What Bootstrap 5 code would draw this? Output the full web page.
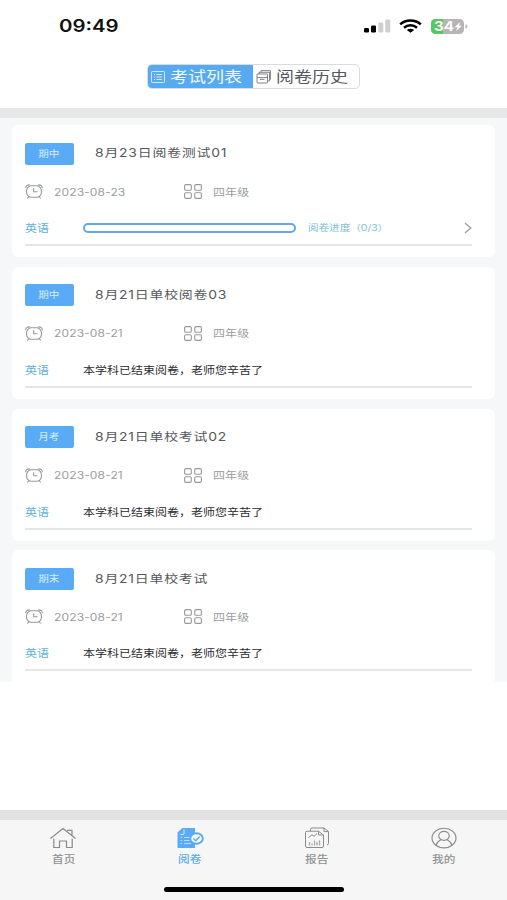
<!DOCTYPE html>
<html lang="zh-CN">
<head>
<meta charset="utf-8">
<meta name="viewport" content="width=device-width, initial-scale=1">
<title>阅卷</title>
<link href="https://cdn.jsdelivr.net/npm/bootstrap@5.3.0/dist/css/bootstrap.min.css" rel="stylesheet">
<style>
body{font-family:Inter,"Noto Sans CJK SC",sans-serif;background:#fff;height:900px;overflow:hidden;line-height:1}
svg{display:block;flex:none}
/* extended letterforms used through the whole app */
.wd{display:inline-block;transform:scaleX(1.2);transform-origin:0 50%;white-space:nowrap}
.statusbar{height:52px;padding:0 39px 0 59px}
.clock{font-size:17px;font-weight:600;color:#111}
.tabs-wrap{height:56px;padding-top:12px}
.seg{width:213px;height:25px;border-radius:5px;border:1px solid #d9dbde;overflow:hidden;font-size:15px}
.seg-a{width:106px;height:25px;margin:-1px 0 -1px -1px;background:#58aaf0;color:#eef7ff;padding-left:4px}
.seg-b{color:#565a60;padding-left:3px}
.band{height:10px;background:#e7e8e8}
.list{height:564px;background:#f5f7f8;padding:7px 12px 0;overflow:hidden}
.exam{height:132px;border:0;border-radius:6px;margin-bottom:9.8px;padding:0 23px 0 12.5px}
.exam:last-child{border-radius:6px 6px 0 0}
.r1{height:22px;margin-top:17.5px}
.tag{width:49.5px;height:22px;background:#58abf4;color:#d9eefd;border-radius:2px;font-size:8.8px;padding-top:1px}
.tag .wd,.tabitem .wd{transform-origin:50% 50%}
.name{font-size:11.6px;color:#55585c;margin-left:21px;letter-spacing:.65px;padding-top:1px}
.r2{height:20px;margin-top:17px;font-size:10px;color:#9b9da0}
.date{margin-left:11.5px;width:130px;letter-spacing:.12px}
.grade{margin-left:11px;letter-spacing:.1px}
.r3{height:25px;margin-top:14px;font-size:10px;color:#5eb2d8}
.subj{width:58.500px}
.msg{color:#2b2c2e}
.bar{width:213px;height:10px;border:2px solid #62a9e3;border-radius:5px;background:#fff}
.prog-t{font-size:8.8px;color:#7dc0d0;margin-left:11.5px}
.rule{height:2px;background:#e4e5e6;margin-top:3.5px}
.blank{height:128px}
.foot{height:80px;background:#f6f6f6;position:relative}
.foot-band{background:#e2e2e2}
.tabitem{width:25%;font-size:9.7px;color:#929292;padding-top:7px}
.tabitem.on{color:#58abf4}
.tabitem .wd{margin-top:6px;font-weight:500}
.homebar{position:absolute;left:164px;top:67px;width:180px;height:5px;border-radius:3px;background:#000}
</style>
<script src="https://cdn.jsdelivr.net/npm/bootstrap@5.3.0/dist/js/bootstrap.bundle.min.js"></script>
</head>
<body>
<svg width="0" height="0" class="position-absolute">
<symbol id="clk" viewBox="0 0 18 15"><g fill="none" stroke="#96999c" stroke-width="1.100"><path d="M5.500 1.700h7q4 1.300 4 5.900t-4 5.700h-7q-4-1.100-4-5.700t4-5.900z"/><path d="M8.700 4.200v3.600h3.800M.7 4.200C.6 2 2.300.8 4.800.9M17.300 4.200C17.400 2 15.700.8 13.200.9M3.800 12.700 2.300 14.500M14.200 12.700l1.500 1.800"/></g></symbol>
<symbol id="grid" viewBox="0 0 18 15"><g fill="none" stroke="#96999c" stroke-width="1.100"><rect x=".6" y=".6" width="6.700" height="5.600" rx="1.300"/><rect x="10.700" y=".6" width="6.700" height="5.600" rx="1.300"/><rect x=".6" y="8.800" width="6.700" height="5.600" rx="1.300"/><rect x="10.700" y="8.800" width="6.700" height="5.600" rx="1.300"/></g></symbol>
</svg>

<header>
<div class="statusbar d-flex justify-content-between align-items-center">
<span class="clock wd">09:49</span>
<div class="d-flex align-items-center">
<svg width="27" height="14" viewBox="0 0 27 14"><rect y="9" width="5" height="4.500" rx="1.200"/><rect x="7" y="6.500" width="5" height="7" rx="1.200"/><g fill="#cfcfcf"><rect x="14.300" y="3.500" width="5" height="10" rx="1.200"/><rect x="21.300" y=".5" width="5" height="13" rx="1.200"/></g></svg>
<svg class="ms-2" width="23" height="14" viewBox="0 0 23 14"><g fill="none" stroke="#000" stroke-width="2.500"><path d="M1.200 5.300C6.800.2 16.200.2 21.800 5.300"/><path d="M5 8.700c3.700-3.200 9.300-3.200 13 0"/></g><path d="M7.800 11q3.700-2.500 7.400 0L11.500 13.700z"/></svg>
<svg style="margin-left:9px" width="37" height="15" viewBox="0 0 37 15"><defs><clipPath id="bt"><rect width="33" height="15" rx="4.500"/></clipPath></defs><g clip-path="url(#bt)"><rect width="33" height="15" fill="#b5b5b5"/><rect width="12" height="15" fill="#55c960"/></g><path d="M34.500 5q2 .6 2 2.500t-2 2.500z" fill="#bbb"/><text x="3" y="12" font-family="Inter" font-size="12.500" font-weight="700" fill="#fff" textLength="20" lengthAdjust="spacingAndGlyphs">34</text><path d="M29 3 23.500 8.300h3L25 12l6-5.300h-3z" fill="#fff"/></svg>
</div>
</div>
<div class="tabs-wrap d-flex justify-content-center">
<div class="seg d-flex align-items-center">
<div class="seg-a d-flex align-items-center"><svg width="14" height="12" viewBox="0 0 14 12" fill="none" stroke="#e5f2fd" stroke-width=".9"><rect x=".5" y=".5" width="13" height="11" rx=".8"/><path d="M3 3.500h1.200M5.500 3.500H11M3 6h1.200M5.500 6H11M3 8.500h1.200M5.500 8.500H11"/></svg><span class="wd" style="margin-left:5px">考试列表</span></div>
<div class="seg-b d-flex align-items-center"><svg width="15" height="14" viewBox="0 0 15 14" fill="none" stroke="#74777c" stroke-width=".9"><rect x="1" y="4" width="10.500" height="9" rx=".6"/><path d="M1 7.600h10.500M4 9.400h4.500M3 4V2.300h10.500v8.500h-2M5 2.300V.6h9.400v8.800h-1"/></svg><span class="wd" style="margin-left:5px">阅卷历史</span></div>
</div>
</div>
<div class="band"></div>
</header>

<main>
<div class="list">
<article class="card exam">
<div class="r1 d-flex align-items-center"><span class="tag d-flex align-items-center justify-content-center"><span class="wd">期中</span></span><span class="name wd">8月23日阅卷测试01</span></div>
<div class="r2 d-flex align-items-center"><svg width="18" height="15"><use href="#clk"/></svg><span class="date"><span class="wd">2023-08-23</span></span><svg width="18" height="15"><use href="#grid"/></svg><span class="grade wd">四年级</span></div>
<div class="r3 d-flex align-items-center"><span class="subj"><span class="wd">英语</span></span><div class="bar"></div><span class="prog-t wd">阅卷进度（0/3）</span><svg class="ms-auto" width="8" height="12" viewBox="0 0 8 12" fill="none" stroke="#9a9c9e" stroke-width="1.300"><path d="M1 1 6.800 6 1 11"/></svg></div>
<div class="rule"></div>
</article>
<article class="card exam">
<div class="r1 d-flex align-items-center"><span class="tag d-flex align-items-center justify-content-center"><span class="wd">期中</span></span><span class="name wd">8月21日单校阅卷03</span></div>
<div class="r2 d-flex align-items-center"><svg width="18" height="15"><use href="#clk"/></svg><span class="date"><span class="wd">2023-08-21</span></span><svg width="18" height="15"><use href="#grid"/></svg><span class="grade wd">四年级</span></div>
<div class="r3 d-flex align-items-center"><span class="subj"><span class="wd">英语</span></span><span class="msg wd">本学科已结束阅卷，老师您辛苦了</span></div>
<div class="rule"></div>
</article>
<article class="card exam">
<div class="r1 d-flex align-items-center"><span class="tag d-flex align-items-center justify-content-center"><span class="wd">月考</span></span><span class="name wd">8月21日单校考试02</span></div>
<div class="r2 d-flex align-items-center"><svg width="18" height="15"><use href="#clk"/></svg><span class="date"><span class="wd">2023-08-21</span></span><svg width="18" height="15"><use href="#grid"/></svg><span class="grade wd">四年级</span></div>
<div class="r3 d-flex align-items-center"><span class="subj"><span class="wd">英语</span></span><span class="msg wd">本学科已结束阅卷，老师您辛苦了</span></div>
<div class="rule"></div>
</article>
<article class="card exam">
<div class="r1 d-flex align-items-center"><span class="tag d-flex align-items-center justify-content-center"><span class="wd">期末</span></span><span class="name wd">8月21日单校考试</span></div>
<div class="r2 d-flex align-items-center"><svg width="18" height="15"><use href="#clk"/></svg><span class="date"><span class="wd">2023-08-21</span></span><svg width="18" height="15"><use href="#grid"/></svg><span class="grade wd">四年级</span></div>
<div class="r3 d-flex align-items-center"><span class="subj"><span class="wd">英语</span></span><span class="msg wd">本学科已结束阅卷，老师您辛苦了</span></div>
<div class="rule"></div>
</article>
</div>
<div class="blank"></div>
</main>

<footer>
<div class="band foot-band"></div>
<nav class="foot d-flex">
<div class="tabitem d-flex flex-column align-items-center"><svg width="28" height="22" viewBox="0 0 28 22" fill="none" stroke="#8b8b8b" stroke-width="1.200"><path d="M1.500 11.500 14 1.500l12.500 10M18 3.300h5v5M4.800 11.800v8.700h5.700v-6.500h7v6.500h5.700v-8.700"/></svg><span class="wd">首页</span></div>
<div class="tabitem on d-flex flex-column align-items-center"><svg width="28" height="22" viewBox="0 0 28 22"><path d="M6.500 1H19v20H1.500V5.500z" fill="#58abf4"/><g fill="none" stroke="#d8edfd" stroke-width="1"><path d="M8 2.500v4q0 1-1 1H4.500"/><path stroke-opacity=".75" d="M4.500 10.500h1.800M8 10.500h6M4.500 13.500h1.800M8 13.500h6M4.500 16.500h1.800M8 16.500h7"/></g><ellipse cx="20.500" cy="11.500" rx="6.300" ry="5.300" fill="#f6f6f6" stroke="#58abf4" stroke-width="1.900"/><path d="m17.300 11.500 2.500 2.200 4-4.200" fill="none" stroke="#58abf4" stroke-width="1.500"/></svg><span class="wd">阅卷</span></div>
<div class="tabitem d-flex flex-column align-items-center"><svg width="26" height="22" viewBox="0 0 26 22" fill="none" stroke="#8b8b8b" stroke-width="1"><path d="M3 4.200h11.500L19.500 8v11q0 1.500-1.500 1.500H3q-1.500 0-1.500-1.500V5.700Q1.500 4.200 3 4.200zM14.500 4.200V8h5M6.500 4V2.500Q6.500 1 8 1h12l4.500 3.600v11.900q0 1.200-1.500 1.200M20 1v3.600h4.500"/><path d="M4.500 10.500 8 7.800l2 1.500L13 6.500"/><path stroke-width="1.300" stroke-opacity=".7" d="M5.500 18.500V15M8 18.500v-2M10.500 18.500v-5M13 18.500V15M15.500 18.500v-5.300"/></svg><span class="wd">报告</span></div>
<div class="tabitem d-flex flex-column align-items-center"><svg width="26" height="22" viewBox="0 0 26 22" fill="none" stroke="#8b8b8b" stroke-width="1.150"><ellipse cx="13" cy="11" rx="12" ry="9.800"/><ellipse cx="13" cy="8.800" rx="5.300" ry="4.500"/><path d="M5 18.200q1.500-4.200 5-5.500M21 18.200q-1.500-4.200-5-5.500"/></svg><span class="wd">我的</span></div>
<div class="homebar"></div>
</nav>
</footer>
</body>
</html>
